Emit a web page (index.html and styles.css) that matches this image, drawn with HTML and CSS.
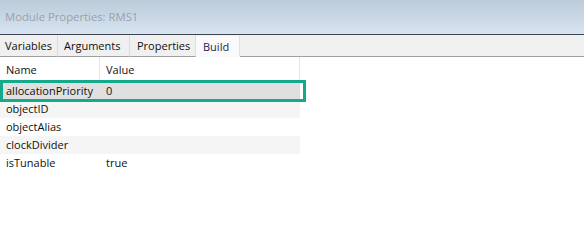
FILE: index.html
```html
<!DOCTYPE html>
<html lang="en">
  <head>
    <meta charset="UTF-8">
    <title>Module Properties: RMS1</title>
    <link rel="stylesheet" href="styles.css">
  </head>
  <body>
    <div class="titlebar">Module Properties: RMS1</div>
    <div class="tabs">
        <div class="tab tab-variables">Variables</div>
        <div class="tab tab-arguments">Arguments</div>
        <div class="tab tab-properties">Properties</div>
        <div class="tab tab-build selected">Build</div>
        <div class="tab-rest"></div>
    </div>
    <div class="grid">
        <div class="row header">
            <div class="cell name">Name</div>
            <div class="cell value">Value</div>
        </div>
        <div class="row current">
            <div class="cell name">allocationPriority</div>
            <div class="cell value">0</div>
        </div>
        <div class="row alt">
            <div class="cell name">objectID</div>
            <div class="cell value"></div>
        </div>
        <div class="row">
            <div class="cell name">objectAlias</div>
            <div class="cell value"></div>
        </div>
        <div class="row alt">
            <div class="cell name">clockDivider</div>
            <div class="cell value"></div>
        </div>
        <div class="row">
            <div class="cell name">isTunable</div>
            <div class="cell value">true</div>
        </div>
        <div class="highlight"></div>
    </div>
  </body>
</html>
```

FILE: styles.css
```css
body {
    margin: 0;
    background: #ffffff;
    font-family: "Open Sans", "Noto Sans", Arial, sans-serif;
    font-size: 11px;
    color: #111111;
}
.titlebar {
    height: 34px;
    line-height: 34px;
    padding-left: 5px;
    font-size: 11.3px;
    color: #9aa1aa;
    background: linear-gradient(#bccbd9, #d7e4f1);
    border-bottom: 1px solid #41454d;
}
.tabs {
    display: flex;
    height: 22px;
    background: #f0f0f0;
}
.tab {
    box-sizing: border-box;
    padding-left: 5px;
    line-height: 22px;
    border-right: 1px solid #dcdcdc;
    border-bottom: 1px solid #a0a0a0;
}
.tab-variables {
    width: 58px;
}
.tab-arguments {
    width: 72px;
    padding-left: 6px;
}
.tab-properties {
    width: 66px;
    padding-left: 7px;
}
.tab.selected {
    width: 44px;
    margin-top: 1px;
    line-height: 21px;
    padding-left: 7px;
    background: #fafafa;
    border-bottom: 1px solid #fafafa;
    border-right: 1px solid #e2e2e2;
    color: #1c1c50;
}
.tab-rest {
    flex: 1;
    border-bottom: 1px solid #a0a0a0;
}
.grid {
    position: relative;
    width: 300px;
}
.row {
    display: flex;
    height: 18px;
    line-height: 18px;
}
.row.header {
    height: 24px;
    line-height: 26px;
    margin-bottom: 1px;
}
.row.header .cell {
    border-right: 1px solid #e4e4e4;
}
.row.current {
    background: #e0e0e0;
    margin-top: 1px;
}
.row.alt {
    background: #f5f5f5;
}
.cell {
    padding-left: 6px;
    box-sizing: border-box;
}
.name {
    width: 100px;
}
.value {
    flex: 1;
}
.highlight {
    position: absolute;
    left: 0;
    top: 23px;
    width: 300px;
    height: 16px;
    border: 3px solid #13a98a;
}
```
